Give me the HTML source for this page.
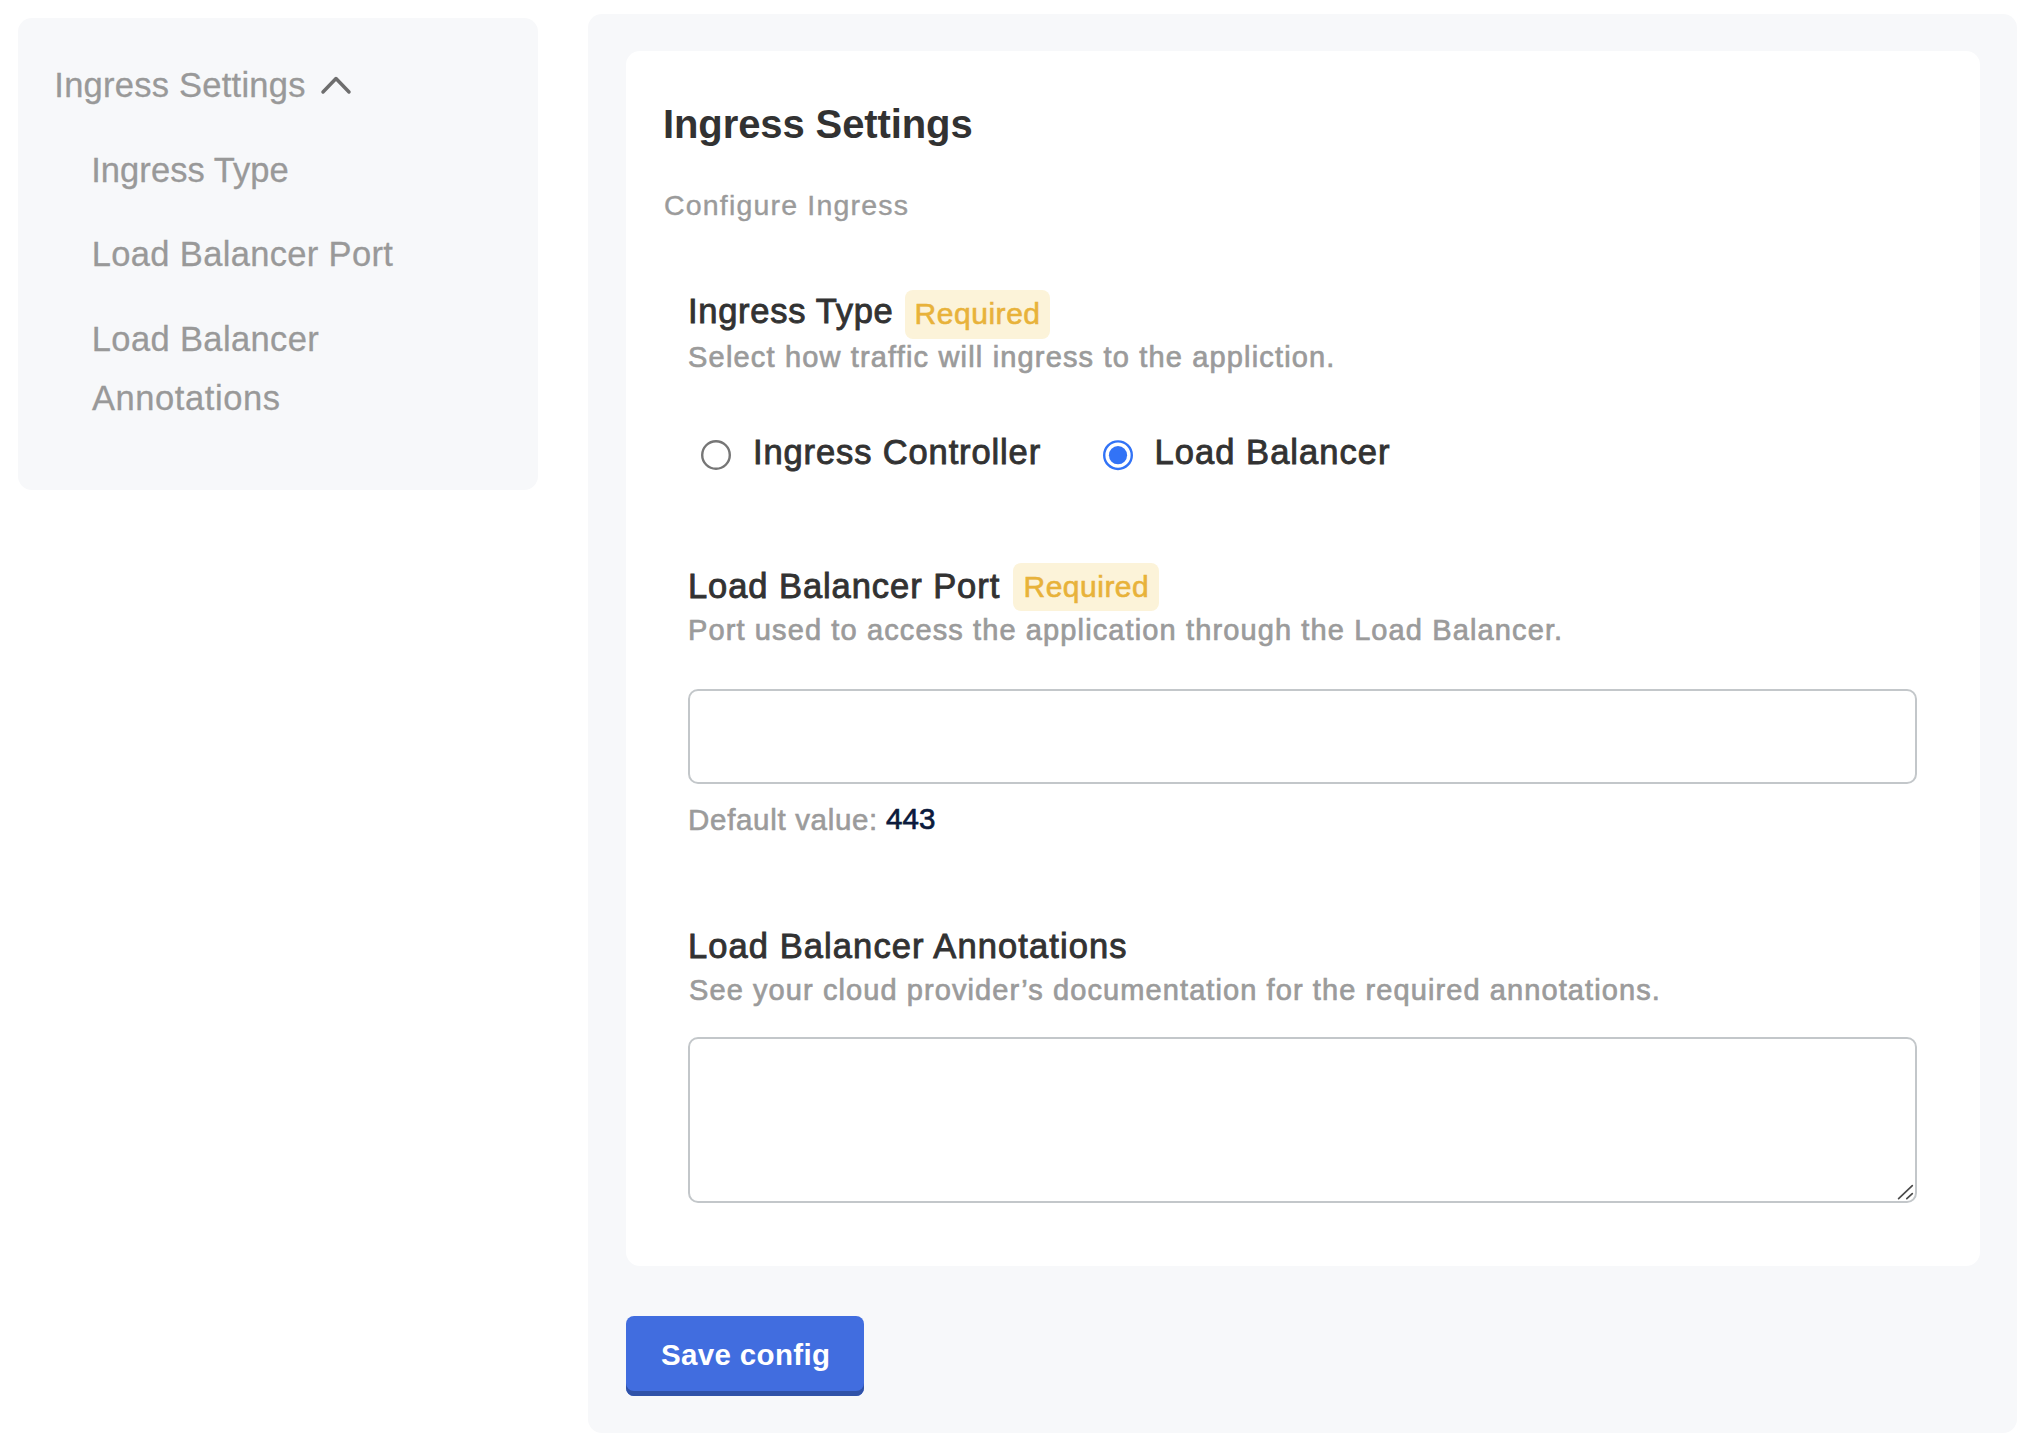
<!DOCTYPE html>
<html><head><meta charset="utf-8"><title>Ingress Settings</title>
<style>
html,body{margin:0;padding:0;background:#fff;width:2036px;height:1452px;overflow:hidden;}
body{position:relative;font-family:"Liberation Sans",sans-serif;}
.t{position:absolute;white-space:nowrap;}
.box{position:absolute;box-sizing:border-box;}
@media (max-width:1500px){html{zoom:0.5;}}
</style></head><body>
<div class="box" id="sidebar" style="left:18px;top:18px;width:520px;height:472px;border-radius:14px;background:#f7f8fa;"></div>
<div class="box" id="main" style="left:588px;top:14px;width:1429px;height:1419px;border-radius:14px;background:#f7f8fa;"></div>
<div class="box" id="card" style="left:626px;top:51px;width:1354px;height:1215px;border-radius:14px;background:#fff;"></div>
<svg class="box" style="left:318px;top:72px;" width="38" height="26" viewBox="0 0 38 26"><polyline points="5,20 18,6.5 31,20" fill="none" stroke="#6e6e6e" stroke-width="3.5" stroke-linecap="round" stroke-linejoin="round"/></svg>
<div class="box" id="badge1" style="left:905px;top:290px;width:145px;height:49px;border-radius:8px;background:#fcf3d9;"></div>
<div class="box" id="badge2" style="left:1013px;top:563px;width:146px;height:48px;border-radius:8px;background:#fcf3d9;"></div>
<svg class="box" style="left:698px;top:437px;" width="36" height="36" viewBox="0 0 36 36"><circle cx="18" cy="18" r="13.8" fill="#fff" stroke="#767676" stroke-width="2.4"/></svg>
<svg class="box" style="left:1100px;top:437px;" width="36" height="36" viewBox="0 0 36 36"><circle cx="18" cy="18.2" r="13.8" fill="#fff" stroke="#3273f6" stroke-width="2.4"/><circle cx="18" cy="18.2" r="9.1" fill="#3273f6"/></svg>
<div class="box" id="input" style="left:688px;top:689px;width:1229px;height:95px;border-radius:10px;border:2px solid #c3c7ca;background:#fff;"></div>
<div class="box" id="textarea" style="left:688px;top:1037px;width:1229px;height:166px;border-radius:10px;border:2px solid #c3c7ca;background:#fff;"></div>
<svg class="box" style="left:1890px;top:1180px;" width="26" height="24" viewBox="0 0 26 24"><line x1="8.6" y1="18.7" x2="22.3" y2="5.7" stroke="#4a4a4a" stroke-width="1.7" stroke-linecap="round"/><line x1="16.8" y1="18.7" x2="22.3" y2="13.6" stroke="#4a4a4a" stroke-width="1.7" stroke-linecap="round"/></svg>
<div class="box" id="button" style="left:626px;top:1316px;width:238px;height:80px;border-radius:8px;background:#416ddf;box-shadow:inset 0 -5px 0 #3052a8;"></div>
<div class="t" id="sb1" style="left:54.30px;top:64.55px;font-size:34.5px;line-height:41px;font-weight:400;color:#999999;letter-spacing:0.253px;-webkit-text-stroke:0.3px #999999;">Ingress Settings</div>
<div class="t" id="sb2" style="left:91.20px;top:149.55px;font-size:34.5px;line-height:41px;font-weight:400;color:#999999;letter-spacing:0.064px;-webkit-text-stroke:0.3px #999999;">Ingress Type</div>
<div class="t" id="sb3" style="left:91.80px;top:233.55px;font-size:34.5px;line-height:41px;font-weight:400;color:#999999;letter-spacing:0.335px;-webkit-text-stroke:0.3px #999999;">Load Balancer Port</div>
<div class="t" id="sb4" style="left:91.80px;top:318.55px;font-size:34.5px;line-height:41px;font-weight:400;color:#999999;letter-spacing:0.367px;-webkit-text-stroke:0.3px #999999;">Load Balancer</div>
<div class="t" id="sb5" style="left:92.00px;top:377.55px;font-size:34.5px;line-height:41px;font-weight:400;color:#999999;letter-spacing:0.570px;-webkit-text-stroke:0.3px #999999;">Annotations</div>
<div class="t" id="h1" style="left:663.00px;top:100.44px;font-size:40px;line-height:48px;font-weight:700;color:#323232;letter-spacing:-0.100px;">Ingress Settings</div>
<div class="t" id="sub" style="left:664.00px;top:187.82px;font-size:28.5px;line-height:34px;font-weight:400;color:#9b9b9b;letter-spacing:1.188px;-webkit-text-stroke:0.4px #9b9b9b;">Configure Ingress</div>
<div class="t" id="l1" style="left:688.00px;top:290.55px;font-size:34.5px;line-height:41px;font-weight:400;color:#323232;letter-spacing:0.718px;-webkit-text-stroke:0.9px #323232;">Ingress Type</div>
<div class="t" id="req1" style="left:914.50px;top:296.20px;font-size:30px;line-height:36px;font-weight:400;color:#e8b23a;letter-spacing:0.543px;-webkit-text-stroke:0.6px #e8b23a;">Required</div>
<div class="t" id="d1" style="left:688.10px;top:340.35px;font-size:29px;line-height:35px;font-weight:400;color:#9b9b9b;letter-spacing:1.161px;-webkit-text-stroke:0.7px #9b9b9b;">Select how traffic will ingress to the appliction.</div>
<div class="t" id="r1" style="left:753.00px;top:431.55px;font-size:34.5px;line-height:41px;font-weight:400;color:#323232;letter-spacing:0.876px;-webkit-text-stroke:0.9px #323232;">Ingress Controller</div>
<div class="t" id="r2" style="left:1154.60px;top:432.15px;font-size:34.5px;line-height:41px;font-weight:400;color:#323232;letter-spacing:1.033px;-webkit-text-stroke:0.9px #323232;">Load Balancer</div>
<div class="t" id="l2" style="left:687.90px;top:565.55px;font-size:34.5px;line-height:41px;font-weight:400;color:#323232;letter-spacing:0.941px;-webkit-text-stroke:0.9px #323232;">Load Balancer Port</div>
<div class="t" id="req2" style="left:1023.50px;top:569.21px;font-size:30px;line-height:36px;font-weight:400;color:#e8b23a;letter-spacing:0.500px;-webkit-text-stroke:0.6px #e8b23a;">Required</div>
<div class="t" id="d2" style="left:688.00px;top:612.55px;font-size:29px;line-height:35px;font-weight:400;color:#9b9b9b;letter-spacing:1.115px;-webkit-text-stroke:0.7px #9b9b9b;">Port used to access the application through the Load Balancer.</div>
<div class="t" id="dv" style="left:688.10px;top:801.58px;font-size:29.5px;line-height:35px;font-weight:400;color:#9b9b9b;letter-spacing:0.677px;-webkit-text-stroke:0.6px #9b9b9b;">Default value:</div>
<div class="t" id="dv2" style="left:885.90px;top:801.28px;font-size:29.5px;line-height:35px;font-weight:400;color:#0b1a3c;letter-spacing:0.100px;-webkit-text-stroke:0.7px #0b1a3c;">443</div>
<div class="t" id="l3" style="left:687.90px;top:925.55px;font-size:34.5px;line-height:41px;font-weight:400;color:#323232;letter-spacing:1.092px;-webkit-text-stroke:0.9px #323232;">Load Balancer Annotations</div>
<div class="t" id="d3" style="left:689.00px;top:972.55px;font-size:29px;line-height:35px;font-weight:400;color:#9b9b9b;letter-spacing:1.087px;-webkit-text-stroke:0.7px #9b9b9b;">See your cloud provider’s documentation for the required annotations.</div>
<div class="t" id="btn" style="left:661.00px;top:1336.98px;font-size:29.5px;line-height:35px;font-weight:700;color:#ffffff;letter-spacing:0.340px;">Save config</div>
</body></html>
